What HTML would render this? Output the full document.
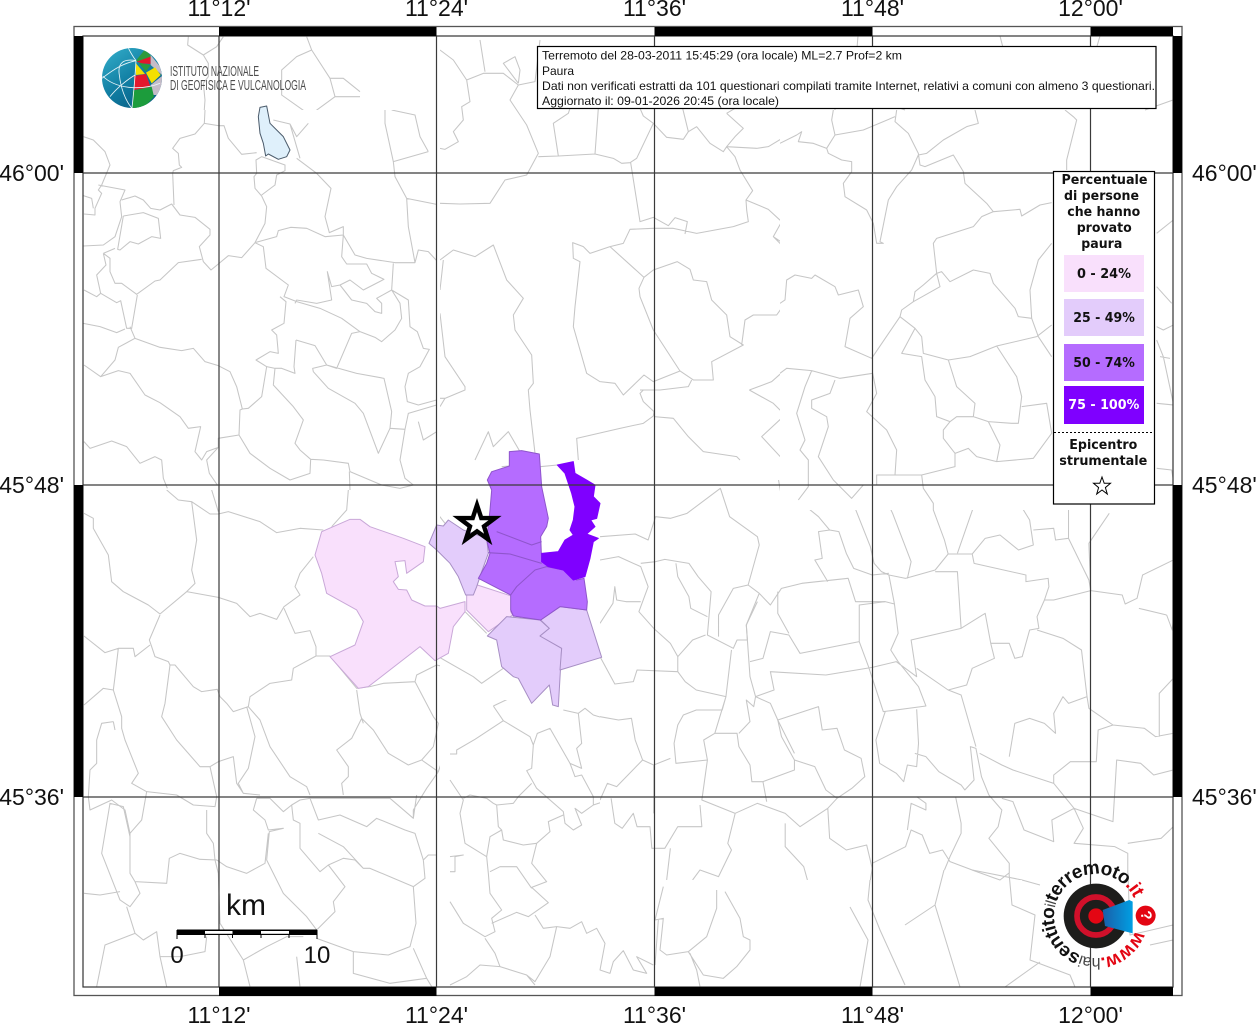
<!DOCTYPE html>
<html><head><meta charset="utf-8"><style>
html,body{margin:0;padding:0;background:#fff;width:1256px;height:1024px;overflow:hidden}
svg{display:block}
.l{fill:none;stroke:#c6c6c6;stroke-width:1.05;vector-effect:non-scaling-stroke;stroke-linejoin:round}
.p{stroke-width:1;vector-effect:non-scaling-stroke;stroke-linejoin:round}
.t{font-family:"Liberation Sans",sans-serif;font-size:23px;fill:#111}
.i{font-family:"Liberation Sans",sans-serif;font-size:12px;fill:#111}
.g{font-family:"DejaVu Sans",sans-serif;font-weight:bold;font-size:13px;fill:#111}
</style></head><body>
<svg width="1256" height="1024" viewBox="0 0 1256 1024" xmlns="http://www.w3.org/2000/svg">
<defs>
<clipPath id="c1"><rect x="83" y="36" width="357" height="74"/></clipPath>
<clipPath id="c7"><rect x="83" y="110" width="357" height="380"/></clipPath>
<clipPath id="c8"><rect x="440" y="36" width="340" height="444"/></clipPath>
<clipPath id="c9"><rect x="780" y="110" width="393" height="400"/></clipPath>
<clipPath id="c10"><rect x="83" y="490" width="357" height="497"/></clipPath>
<clipPath id="c2"><rect x="440" y="460" width="160" height="240"/></clipPath>
<clipPath id="c11"><rect x="440" y="700" width="160" height="287"/><rect x="600" y="880" width="250" height="107"/></clipPath>
<clipPath id="c12"><rect x="600" y="480" width="180" height="400"/><rect x="780" y="510" width="393" height="370"/></clipPath>
<clipPath id="glob"><circle cx="216" cy="234" r="90"/></clipPath>
<linearGradient id="gb" x1="0" y1="0" x2="0.7" y2="1"><stop offset="0" stop-color="#35b0cc"/><stop offset="0.6" stop-color="#0f7ba0"/><stop offset="1" stop-color="#0a5f86"/></linearGradient>
<linearGradient id="cone" x1="0" y1="0" x2="1" y2="0"><stop offset="0" stop-color="#1a5ea8"/><stop offset="1" stop-color="#009fe3"/></linearGradient>
<path id="arc" d="M1135.5 930.4 A42 42 0 1 1 1137.4 923.3"/>
</defs>
<rect width="1256" height="1024" fill="#fff"/>

<g clip-path="url(#c1)"><g transform="translate(60,0) scale(.33333)"><path class="l" d="M385 110L383 135L430 165L445 190L445 230L430 250L435 300L430 370M430 165L470 140L490 110M740 110L755 150L710 170L665 210L665 285L750 345M755 150L810 235L850 235L900 275M810 235L825 290L750 345M825 290L900 290"/></g></g>

<g clip-path="url(#c7)"><g transform="translate(80,110) scale(.33333)"><path class="l" d="M375 0L373 40L415 47L432 47L445 85L485 133L530 128M373 40L345 72L300 85L278 115L295 130L298 165L305 172L280 182L278 190L282 285M10 80L40 90L75 125L90 165L65 225L55 240L65 250L45 295L45 315L12 312M10 257L35 265L40 295M55 225L135 240L120 275L125 320L105 380L70 405L10 408M125 270L165 258L190 270L212 295L240 300L275 282L300 315L345 322L390 358L390 375L358 410L370 455L393 480L415 462L445 437L485 443L525 398L555 340L560 290L545 258L525 235L522 200L530 190L528 150L545 140L615 165L615 182L590 195L585 225L545 255M130 318L190 308L235 325L242 385L215 380L175 402L150 395L120 420L113 418L130 318M70 430L105 415M70 430L90 445L90 485L105 520L125 520L170 553L225 513L240 510L295 458L365 448M70 430L78 465L50 495L62 550L50 560L12 540M62 550L110 578L122 572L140 655L155 655L172 555M150 650L165 685L115 712L105 750L62 800L12 765M10 640L60 650L110 668L135 657M165 685L240 712L305 722L340 715L375 755L415 767L450 785L470 830L487 897L505 895L545 860L560 770M62 800L115 782L150 790L195 855L240 878L300 920L325 955L362 950L345 1025L365 1050L380 1025L415 1012M12 995L30 1015L95 993L140 1010L180 1060L225 1040L245 1050L250 1105L262 1135M415 1012L380 1050L388 1090L412 1125M415 1012L415 985L477 975L480 900L487 897"/>
<path class="l" d="M477 975L510 1030L570 1075L630 1110L690 1090L692 1048L660 1020L645 1000L670 930L640 890L580 825L585 775L560 770L528 750L570 725L595 730L590 675L575 660L612 640L618 575L600 560M525 398L550 410L558 475L625 525L612 560L650 575L720 595L785 625L840 665L885 682L905 695L945 660L965 625L960 580L935 540L940 460M525 398L590 380L595 362L632 352L680 355L735 380L790 375L790 350L748 368L735 320L753 235L710 190L650 145M790 375L825 435L860 445L945 458L1005 458L1015 420L1045 425L1070 452M1005 458L985 350L980 265L1070 283M980 265L945 200L940 155L1045 125M940 155L915 40L915 0M935 0L1005 15L1020 80L1045 125M790 375L785 440L800 462L860 462L875 490L912 508L850 540L810 510L780 525L755 530L742 485L755 570L710 580L650 570L645 580M780 525L815 570L860 580L885 605L905 610L905 580L890 565L935 540L985 570L990 650L1012 665L1030 715L1048 718L1020 770L985 790L975 830L982 875L1015 885L1070 870M648 690L705 707L740 765L770 775L815 670L840 665M648 690L642 770L645 790L605 775L585 775M698 775L740 765L830 790L912 805L935 905L930 955L895 1030L850 910L825 880L745 835L700 785ZM930 955L975 958L960 1050L975 1105L1000 1125L960 1135L905 1125L810 1085L805 1060L730 1050L692 1048M975 958L985 910L1070 885M1015 935L1030 990L1070 965M808 1085L810 1140M580 30L630 42L650 80L685 40M630 42L660 145"/></g></g>

<g clip-path="url(#c8)"><g transform="translate(440,40) scale(.33333)"><path class="l" d="M0 30L40 60L80 120L90 185L65 200L70 240L40 275L55 305L15 328L0 325M80 120L130 100L190 100L235 135L210 180L260 255L295 340L260 405L195 420L150 490L60 492L0 490M235 135L285 125L300 0M235 130L190 70L225 50L240 90L235 130M120 0L135 95M295 350L355 348L340 250L385 220L390 205M355 348L465 342L475 205M465 342L520 355L545 370L570 368L590 355L640 250L610 228L600 205M640 250L680 292L730 298L745 275L770 260L810 310L850 335L860 320L885 350L900 390L938 452L918 480L920 510L925 545L880 560L770 580L700 565L640 565L570 568L550 610L510 620L450 640L430 620L398 608L400 655L420 665L405 800L400 860L440 1000L480 1025L525 1030L550 1065L612 1005L640 1025L720 993M572 368L600 545L640 532L685 557L705 533L742 545L735 582M510 620L612 712L640 690L712 665L750 688L760 720L800 725L815 780L860 825L870 890L910 915L815 965L820 1020L760 1020L720 993L640 870L600 770L597 745L612 712M918 480L985 508L1025 545L1000 590L1050 640L1050 700L1060 705L1115 715L1200 765M1000 590L1045 620L1068 680L1060 710M1050 700L1035 790L1010 825L940 825L915 840L905 915"/>
<path class="l" d="M610 1050L600 1060L610 1085L642 1115L640 1128L610 1150L540 1165L410 1195L415 1260M600 1050L660 1050L745 1040L755 1020M642 1130L700 1135L745 1190L790 1235L890 1250L900 1260M928 1050L1000 1090L1035 1125L965 1190L1030 1260M928 1050L995 1025L1040 985L1110 992L1200 1020M1110 992L1090 1100L1075 1180L1095 1260M1090 1100L1130 1120L1080 1170M1130 1120L1165 1140L1130 1260M1090 1075L1180 1060L1190 1015M860 220L910 265L885 290L860 320L950 325L985 320L1060 275L1090 280L1085 305L1165 320L1200 355M1165 320L1180 250L1200 220M728 205L745 275M860 220L885 205M0 660L40 630L105 650L160 615L200 720L250 775L220 825L225 870L275 945L280 1030L265 1050L270 1110L285 1240M10 660L0 750M0 820L15 950L75 1040L75 1050L15 1075L0 1075M0 1100L15 1075M105 1260L145 1175L160 1220L205 1175L240 1235"/></g></g>

<g clip-path="url(#c9)"><g transform="translate(780,110) scale(.33333)"><path class="l" d="M0 100L50 75L65 65L55 95L100 100L140 115L145 130L185 150L215 155L215 185L190 220L195 260L260 300L280 340L290 400L310 400L300 395L325 270L350 230L395 180L415 135L440 130L490 90L560 50L595 40L585 0M350 0L345 35L385 70L415 130L420 165L435 170L520 135L550 185L555 220L620 280L640 305L720 298L725 318L780 285L815 278M140 115L165 75L155 30L160 0M165 75L250 60L345 20M640 305L605 320L580 350L470 385L460 400L470 490L430 525L405 545L400 575L365 600L360 620L275 745L195 710L210 625L250 590L235 540L175 555L165 530L105 495L95 505L45 495L20 510L15 570L0 580M470 490L485 485L510 515L580 480L630 490L640 520L705 595L715 620L755 625L775 680L815 740M470 490L480 530L400 575M755 625L750 540L775 450L815 400M770 680L815 645M360 620L405 655L365 730L425 740L435 810L465 860L470 920L510 935L530 920L580 920L585 880L530 830L505 750L430 730L425 680L405 655M505 750L570 740L650 708L770 680M650 708L710 800L725 860L715 940L695 940L625 935L580 920M725 890L800 880L815 970L760 1045L650 1055L590 1040L565 1015L525 1030L490 985L490 960L510 935M625 935L660 1005L650 1055M525 1030L525 1070L425 1095L290 1095L290 1125M425 1095L430 1135L460 1180L460 1200M345 1095L350 1020L320 960L260 905L290 850L278 790M0 790L20 775L95 782L180 805L278 790M95 782L75 830L50 910L75 990L60 1020L85 1050L85 1130L55 1170M165 810L150 850L95 870L95 895L140 920L145 950L115 1040L160 1110L215 1165L250 1125L340 1125M855 0L880 20L890 30L860 150L860 180M1130 370L1180 330M1130 530L1175 580M1130 650L1150 660L1180 645M1130 690L1150 740L1180 880M1130 880L1180 885M1130 1075L1175 1080L1180 1110M1140 740L1170 745"/></g></g>

<g clip-path="url(#c10)"><g transform="translate(80,490) scale(.33333)"><path class="l" d="M260 0L295 30L335 35L350 150L335 240L345 280L320 305L240 372L205 345L130 305L95 275L85 195L40 115L40 85L12 70M335 35L390 72L415 72L445 65L540 95L590 128L660 115L730 120M395 0L415 65M805 0L800 60L755 110M320 305L415 322L470 340L510 380L540 370L590 388L612 350L660 315L645 290L660 250L700 200M612 355L645 430L690 422L708 470L708 498L750 498M708 498L640 535L635 570L570 580L510 620L505 650L460 665L440 640L420 620L412 598L365 605L340 590L285 525L270 525L265 515L225 500L215 470L208 450L240 375M210 465L165 500L160 475L115 475L75 488L12 438M115 475L105 560L100 600L125 680L125 715L135 750L175 850L155 880L200 905L290 915L340 945L405 950L410 920L390 830L415 815L460 800L470 880L490 910L540 915M270 525L255 640L245 680L290 750L360 830L390 830M12 645L70 595L100 600M100 695L105 720M100 695L65 700L50 750L50 820L30 840L25 920L30 960L95 930L135 960L150 1030L185 990L200 905M500 650L525 740L505 835L475 880L490 910M505 650L540 690L570 770L630 860L680 890L690 915M850 700L840 670L830 600M750 498L830 595L870 590L910 580L1005 575L1010 555L1070 525L1150 545L1200 580M1005 575L1060 680L1075 700L1060 770L1025 810L985 825L925 790L880 720L845 685L815 745L770 780L805 830L805 860L785 880L790 915"/>
<path class="l" d="M1025 810L1075 845L1090 800L1130 790M1075 845L1040 895L1000 960L1000 985L1010 915M690 925L715 990L780 975L860 1010L890 985L975 1020L1005 1030L1030 1110L1045 1095L1070 1095M635 945L640 990L660 1000L660 1075L720 1145L745 1125L795 1190L760 1235L765 1265L710 1320L680 1280L610 1210L560 1110L568 1025L610 1015L565 1020L555 990L520 960L530 925M530 925L570 925L610 965L635 945L660 930L690 925L930 925L1000 985M715 1030L790 1070L850 1135L870 1135L1000 1190L1008 1300L990 1370L925 1395L820 1385L710 1345M745 1125L790 1105L825 1110L850 1135M1000 1190L1035 1165L1030 1110M150 1030L150 1150L165 1175L260 1180L268 1105L300 1090L360 1108L410 1110L440 1130L500 1150L555 1120L565 1030M380 960L380 1030L400 1060L405 1110L415 1150L420 1300L490 1410L560 1370L620 1340L670 1340M165 1175L180 1210L150 1250L120 1230L65 1090L90 940L130 950L150 1040M120 1205L60 1215L12 1210M140 1250L165 1330L190 1350L230 1325L240 1400L300 1400L375 1385L380 1340M165 1330L75 1365L50 1490M490 1410L510 1490M650 1400L660 1490M240 1400L260 1490M820 1385L820 1450L930 1480L1040 1465L1000 1375M1040 1465L1055 1490"/></g></g>

<g clip-path="url(#c2)"><g transform="translate(300,430) scale(.33333)"><path class="l" d="M400 235L435 280M720 110L772 105M415 680L520 740L545 760L610 715M495 545L560 610M605 110L628 108"/></g></g>

<g clip-path="url(#c11)"><g transform="translate(450,680) scale(.33333)"><path class="l" d="M130 78L210 40M130 78L160 122L240 170L250 195L262 160L300 145L360 250L395 265L380 205L395 190L385 100L340 90M385 100L405 85L430 105L480 120L545 118L555 180L575 235L610 255L610 350L600 440L600 510L650 505M160 122L75 178L20 210L20 222L0 222M250 195L245 265L230 272L260 325L340 395L345 430L370 450L395 435L375 385L395 400L430 375L470 362L470 315L505 300L535 262L575 235M360 250L375 290L395 285L430 350L430 375M245 310L205 350L190 370L140 375L145 440L155 450L120 470L110 530M0 300L40 360L30 400L45 490L110 530L115 580L120 640L155 690L125 715L135 755L105 770L40 730L0 665M40 355L60 345L110 355L130 370L140 375M155 450L160 480L220 495L260 490L300 455L295 425L340 405M260 490L245 550L290 605L245 622L295 668L235 710L200 697L125 730M120 575L150 560L200 560L245 625M255 705L280 745L320 740L360 745L395 725L410 760L440 745L465 790L450 870L480 880L490 845L520 812L550 870L590 880L560 830L610 855M320 740L300 830L255 905L230 885L150 860L135 820L105 775M505 350L490 400L495 430L520 445L530 405L555 400L560 440L600 430M0 530L40 525L15 530L15 575L0 575M150 860L90 855L50 890L20 905L0 915M230 885L255 915M615 855L625 720M800 630L800 685L770 770L715 815L650 825L630 810L640 715L615 720L640 620M825 635L870 715L880 770L900 780L900 810L860 860L820 895L760 885L715 815M720 820L740 870L750 920"/></g></g>

<g clip-path="url(#c12)"><g transform="translate(600,480) scale(.37037,.33333)"><path class="l" d="M0 170L95 162L130 180L150 110L190 115L235 100L325 25L350 110L425 170L430 195L400 315L430 340L460 375L490 325L545 310L670 295L690 365L770 365L795 372L780 285L825 295L905 270L940 222L1005 222L1010 250L1150 285L1150 305L1210 295L1212 320L1200 360L1225 360L1325 332L1410 345L1418 372L1450 355L1465 285L1548 240M880 30L930 180L940 222M1005 222L1040 175L1080 165L1130 210L1170 195L1160 120L1110 30M1170 150L1225 145L1230 180L1265 175L1265 85M1265 175L1320 300L1325 332M1325 332L1320 190L1375 100M965 220L1015 60L1010 30L970 10M830 295L840 245L790 100L760 30L740 15L680 60L730 200L740 250L760 275L780 285M680 60L630 0M540 65L590 110L620 150L590 155L600 235L580 240L615 305M620 150L645 155L665 220L685 265L735 285L780 280M540 65L520 85L490 50L482 0M540 65L565 10M110 250L150 245L175 238L240 250L265 290L300 335L290 465L360 505L370 480L398 480L395 435L430 340M0 240L50 230L110 260L130 320L105 395L145 445L190 490L210 530L210 575L100 570L90 605L40 612L0 530M205 250L210 290L240 350L245 385L290 410M110 365L70 365L45 360L40 320L35 370L0 430M210 530L250 480L285 465M210 575L230 605L260 630L340 650L355 510M340 650L330 690L260 690L225 705L210 735L200 790L205 850L290 840L280 780L310 760L370 760L375 800L405 855L410 905L440 905L525 870L525 840L490 770L480 720L590 680L600 750L640 745L660 810L705 835L715 890L680 925L640 955L610 930L580 860L525 840M340 650L310 760M320 470L320 405L360 325L400 315"/>
<path class="l" d="M425 365L395 435L405 590L420 650L470 630L460 575L610 585L735 562L800 545L855 590L840 480L975 445L1040 400L1055 490L1105 490L1120 535L1140 530L1160 450L1185 445L1180 410L1200 360M975 445L965 275L905 275M405 545L440 535L460 455L510 465L540 520L700 485L725 560L765 695L880 678L860 620L805 545L785 510L805 460L795 372M700 485L700 375L770 365M480 335L480 400L510 460M420 650L415 680L395 660L405 725L375 760M420 650L460 670L480 720L525 820M770 695L745 780L755 850L800 880L820 905L830 855L855 860L860 790L855 688M850 820L880 830L915 875L975 915L985 930L1010 900L1000 800L1015 805L1030 890L1050 945L1085 990L1075 1040L1050 1075L1105 1150L1105 1180M855 565L940 630L975 645L1015 800M940 630L990 615L1005 565L1065 535L1055 490M1025 820L1085 855L1115 870L1225 910L1225 885L1270 845L1340 845L1345 750L1385 735L1470 745L1500 770L1548 760M1105 830L1120 730L1160 715L1200 730L1230 760L1225 700L1250 650L1265 670L1315 650L1300 510L1250 475L1180 450M1315 650L1320 685L1385 735M1510 770L1510 640L1548 595M1530 405L1545 450L1548 420M1455 385L1530 405M1225 910L1280 985L1305 1045L1280 1090L1390 1100L1425 1120L1425 1180M1280 985L1385 1025L1395 840L1460 850L1495 885L1548 870M1425 1090L1515 1075L1548 1040M1085 955L1115 965L1145 1050L1225 1085L1220 1020L1280 985M0 710L50 720L85 715L95 780L115 840L145 855L190 835M115 840L45 920L20 910L0 960M30 955L40 1030L60 1045L90 1000L100 1040L135 1040L140 1105L175 1105L210 1040L275 1040L270 975M145 855L145 1000M290 840L275 960L365 1000L425 970L500 1000L540 1040L615 985L640 955M440 905L450 965M500 1030L500 1100L550 1160L560 1200M365 1000L345 1090L355 1110L320 1190L270 1170L250 1200M615 985L620 1075L665 1110L720 1095L735 1165L730 1200M735 1150L825 1100L840 1050L870 1065L890 1120L925 1110L945 1145L1005 1170L1140 1200M855 950L880 970L880 990L840 970L830 1050M960 950L975 1030L975 1060L945 1130L930 1170M190 1105L180 1200"/></g></g>

<!-- remaining regions -->
<path class="l" d="M870 880L868 900L880 930L905 985M972 870L1000 880L1009 873M944 870L935 905L960 987M1009 873L1012 905L1035 915L1030 960L1070 975L1075 987M1022 880L1040 885M1128 873L1130 935L1173 925M1150 945L1173 940M905 925L935 905M850 907L868 940L860 987M1040 962L1005 987M858 36L856 60L880 75L878 100L905 110M1000 36L1010 75L1040 95L1115 105M1100 36L1090 70L1065 100M1145 110L1173 100M780 70L800 60L835 85L835 110"/>

<!-- lake -->
<g transform="translate(60,0) scale(.33333)"><path class="p" fill="#dff0fb" stroke="#4a5a6a" d="M600 322L620 318L630 370L670 410L690 450L680 470L655 478L625 462L617 468L610 430L600 400L595 350Z"/></g>

<!-- municipalities -->
<g transform="translate(300,430) scale(.33333)">
<path class="p" fill="#f9e0fc" stroke="#c9a8d8" d="M65 305L95 292L150 268L180 268L210 290L310 325L375 350L370 395L320 430L315 392L285 395L295 440L280 455L295 478L320 480L335 510L375 528L410 528L420 535L495 515L495 545L460 590L445 670L405 692L360 650L205 770L175 775L90 680L165 645L190 575L170 540L80 490L65 430L45 375Z"/>
<path class="p" fill="#f9e0fc" stroke="#c9a8d8" d="M500 495L532 465L640 500L632 545L638 555L565 605L500 540Z"/>
<path class="p" fill="#e3ccfb" stroke="#a78fc4" d="M387 340L410 285L430 288L445 270L490 300L560 325L565 370L545 425L530 470L520 495L497 495L475 440L450 400L410 360Z"/>
<path class="p" fill="#e3ccfb" stroke="#a78fc4" d="M562 618L620 560L720 570L748 595L720 618L785 655L775 830L758 825L748 765L695 820L655 745L640 740L605 710L590 630Z"/>
<path class="p" fill="#e3ccfb" stroke="#a78fc4" d="M722 570L780 530L860 540L905 682L780 720L785 655L720 618L748 595Z"/>
<path class="p" fill="#b56cff" stroke="#8f55cc" d="M562 150L575 125L628 108L628 65L665 62L718 72L725 170L745 265L740 290L722 320L725 395L748 405L700 440L650 470L632 495L535 445L560 400L570 370L560 330L570 240L575 180Z"/>
<path class="p" fill="#b56cff" stroke="#8f55cc" d="M632 495L650 470L705 420L740 410L790 420L830 450L852 445L862 515L860 540L780 530L722 570L640 558L632 540Z"/>
<path class="l" style="stroke:#8f55cc" d="M590 305L695 345L725 335M565 368L630 372L725 400"/>
<path class="p" fill="#7f00ff" stroke="#7f00ff" d="M772 105L820 95L825 130L860 150L885 165L880 200L900 220L890 265L872 270L885 290L860 312L895 325L880 335L870 385L855 440L820 450L790 420L745 410L725 395L725 370L775 365L795 330L820 315L810 300L820 270L825 230L815 190L795 130Z"/>
</g>

<!-- graticule -->
<path d="M219 36V987M436.5 36V987M654.5 36V987M872.5 36V987M1090.5 36V987M83 173H1173M83 485H1173M83 797H1173" fill="none" stroke="#3a3a3a" stroke-width="1.2"/>

<!-- frame -->
<rect x="74" y="26.5" width="1108" height="969" fill="none" stroke="#555" stroke-width="1.3"/>
<rect x="83" y="36" width="1090" height="951" fill="none" stroke="#333" stroke-width="1.2"/>
<g fill="#000">
<rect x="219" y="27" width="217.5" height="9"/><rect x="654.5" y="27" width="218" height="9"/><rect x="1090.5" y="27" width="82.5" height="9"/>
<rect x="219" y="987" width="217.5" height="9"/><rect x="654.5" y="987" width="218" height="9"/><rect x="1090.5" y="987" width="82.5" height="9"/>
<rect x="74" y="36" width="9" height="137"/><rect x="74" y="485" width="9" height="312"/>
<rect x="1173" y="36" width="9" height="137"/><rect x="1173" y="485" width="9" height="312"/>
</g>

<!-- tick labels -->
<g text-anchor="middle">
<text class="t" x="219" y="16">11°12'</text><text class="t" x="436.5" y="16">11°24'</text><text class="t" x="654.5" y="16">11°36'</text><text class="t" x="872.5" y="16">11°48'</text><text class="t" x="1090.5" y="16">12°00'</text>
<text class="t" x="219" y="1023">11°12'</text><text class="t" x="436.5" y="1023">11°24'</text><text class="t" x="654.5" y="1023">11°36'</text><text class="t" x="872.5" y="1023">11°48'</text><text class="t" x="1090.5" y="1023">12°00'</text>
</g>
<g text-anchor="end"><text class="t" x="64" y="181">46°00'</text><text class="t" x="64" y="493">45°48'</text><text class="t" x="64" y="805">45°36'</text></g>
<text class="t" x="1192" y="181">46°00'</text><text class="t" x="1192" y="493">45°48'</text><text class="t" x="1192" y="805">45°36'</text>

<!-- INGV logo -->
<g transform="translate(60,0) scale(.33333)">
<circle cx="216" cy="234" r="90" fill="url(#gb)"/>
<g clip-path="url(#glob)">
<path fill="#2c9a3c" d="M228 182L255 148L282 178L232 185Z"/>
<path fill="#e3172d" d="M230 185L272 170L272 192L245 190Z"/>
<path fill="#c5bcc8" d="M272 165L300 200L306 225L272 195Z"/>
<path fill="#f4e000" d="M226 188L255 222L228 225Z"/>
<path fill="#2c9a3c" d="M235 188L272 195L258 215Z"/>
<path fill="#f4e000" d="M258 218L285 202L302 225L275 250Z"/>
<path fill="#e3172d" d="M222 228L258 222L272 262L222 270Z"/>
<path fill="#c5bcc8" d="M272 255L306 228L306 260L290 285L280 285Z"/>
<path fill="#1c9c3c" d="M218 272L275 260L282 290L250 325L218 325Z"/>
<path d="M228 182C190 190 165 205 126 235M228 182C215 165 208 150 205 144M228 182C190 175 172 190 178 225C182 262 195 300 215 324M228 182C226 220 222 270 216 324M128 228C170 270 250 270 300 250M150 290C170 265 200 240 225 225" fill="none" stroke="#e8f4f8" stroke-width="2.6"/>
</g></g>
<g font-family="'Liberation Sans',sans-serif" fill="#4d4d4d" style="font-size:15px">
<text x="170" y="76" textLength="89" lengthAdjust="spacingAndGlyphs">ISTITUTO NAZIONALE</text>
<text x="170" y="90" textLength="136" lengthAdjust="spacingAndGlyphs">DI GEOFISICA E VULCANOLOGIA</text>
</g>

<!-- info box -->
<rect x="537.5" y="46.5" width="618.5" height="62" fill="#fff" stroke="#000" stroke-width="1.2"/>
<text class="i" x="542" y="59.5" textLength="360" lengthAdjust="spacingAndGlyphs">Terremoto del 28-03-2011 15:45:29 (ora locale) ML=2.7 Prof=2 km</text>
<text class="i" x="542" y="75">Paura</text>
<text class="i" x="542" y="90" textLength="613" lengthAdjust="spacingAndGlyphs">Dati non verificati estratti da 101 questionari compilati tramite Internet, relativi a comuni con almeno 3 questionari.</text>
<text class="i" x="542" y="105" textLength="237" lengthAdjust="spacingAndGlyphs">Aggiornato il: 09-01-2026 20:45 (ora locale)</text>

<!-- legend -->
<rect x="1053.5" y="171.5" width="101" height="332.5" fill="#fff" stroke="#000" stroke-width="1.2"/>
<text class="g" x="1061.5" y="184" textLength="86" lengthAdjust="spacingAndGlyphs">Percentuale</text>
<text class="g" x="1064" y="200" textLength="75" lengthAdjust="spacingAndGlyphs">di persone</text>
<text class="g" x="1067.3" y="216" textLength="73" lengthAdjust="spacingAndGlyphs">che hanno</text>
<text class="g" x="1076.7" y="232" textLength="55" lengthAdjust="spacingAndGlyphs">provato</text>
<text class="g" x="1081.3" y="248" textLength="41" lengthAdjust="spacingAndGlyphs">paura</text>
<rect x="1064" y="255" width="80" height="37" fill="#f9e0fc"/>
<rect x="1064" y="299" width="80" height="37" fill="#e3ccfb"/>
<rect x="1064" y="344" width="80" height="37" fill="#b56cff"/>
<rect x="1064" y="386" width="80" height="38" fill="#7f00ff"/>
<text class="g" x="1077" y="278" textLength="54" lengthAdjust="spacingAndGlyphs">0 - 24%</text>
<text class="g" x="1073.3" y="322" textLength="61.5" lengthAdjust="spacingAndGlyphs">25 - 49%</text>
<text class="g" x="1073.3" y="367" textLength="61.5" lengthAdjust="spacingAndGlyphs">50 - 74%</text>
<text class="g" x="1068.3" y="409" textLength="71" lengthAdjust="spacingAndGlyphs" style="fill:#fff">75 - 100%</text>
<path d="M1054 432.5H1154" stroke="#000" stroke-width="1" stroke-dasharray="2 2"/>
<text class="g" x="1069.3" y="449" textLength="68" lengthAdjust="spacingAndGlyphs">Epicentro</text>
<text class="g" x="1059.3" y="465" textLength="88" lengthAdjust="spacingAndGlyphs">strumentale</text>
<path d="M1102 477L1104.2 483.3L1110.5 483.3L1105.4 487.6L1107.3 494L1102 490L1096.7 494L1098.6 487.6L1093.5 483.3L1099.8 483.3Z" fill="#fff" stroke="#000" stroke-width="1"/>

<!-- epicentre star -->
<path d="M477 505L481.3 518.1L495 518.1L484 526.3L488.2 539.4L477 531.3L465.8 539.4L470 526.3L459 518.1L472.7 518.1Z" fill="none" stroke="#000" stroke-width="4.4" stroke-miterlimit="10"/>

<!-- scale bar -->
<rect x="177" y="929.5" width="140" height="5.5" fill="#000"/>
<rect x="205" y="931" width="27.5" height="2.8" fill="#fff"/><rect x="261" y="931" width="28" height="2.8" fill="#fff"/>
<path d="M177 930V939M317 930V939M205 935V938M232.5 935V938M261 935V938M289 935V938" stroke="#000" stroke-width="1"/>
<text x="226" y="915" font-family="'Liberation Sans',sans-serif" font-size="30" fill="#111">km</text>
<text x="177" y="963" text-anchor="middle" font-family="'Liberation Sans',sans-serif" font-size="24" fill="#111">0</text>
<text x="317" y="963" text-anchor="middle" font-family="'Liberation Sans',sans-serif" font-size="24" fill="#111">10</text>

<!-- hai sentito logo -->
<g transform="translate(1030,850) scale(.33333)">
<circle cx="198" cy="198" r="97" fill="#1d1d1b"/>
<circle cx="198" cy="198" r="57" fill="none" stroke="#d0102a" stroke-width="17"/>
<circle cx="198" cy="198" r="23" fill="#e30613"/>
<path d="M218 180L298 150L308 155L308 250L225 228Z" fill="url(#cone)"/>
<circle cx="347" cy="197" r="30" fill="#e30613"/>
</g>
<text x="1145.7" y="920" fill="#fff" font-family="'Liberation Sans',sans-serif" font-weight="bold" font-size="15" text-anchor="middle" transform="rotate(80 1145.7 915.5)">?</text>
<text font-family="'Liberation Sans',sans-serif" font-size="19" fill="#111" letter-spacing="-0.55">
<textPath href="#arc"><tspan fill="#e30613" font-weight="bold">www.</tspan><tspan fill="#444" font-size="16">hai</tspan><tspan font-weight="bold">sentito</tspan><tspan fill="#444" font-size="15">il</tspan><tspan font-weight="bold">terremoto</tspan><tspan fill="#e30613" font-weight="bold">.it</tspan></textPath>
</text>
</svg>
</body></html>
